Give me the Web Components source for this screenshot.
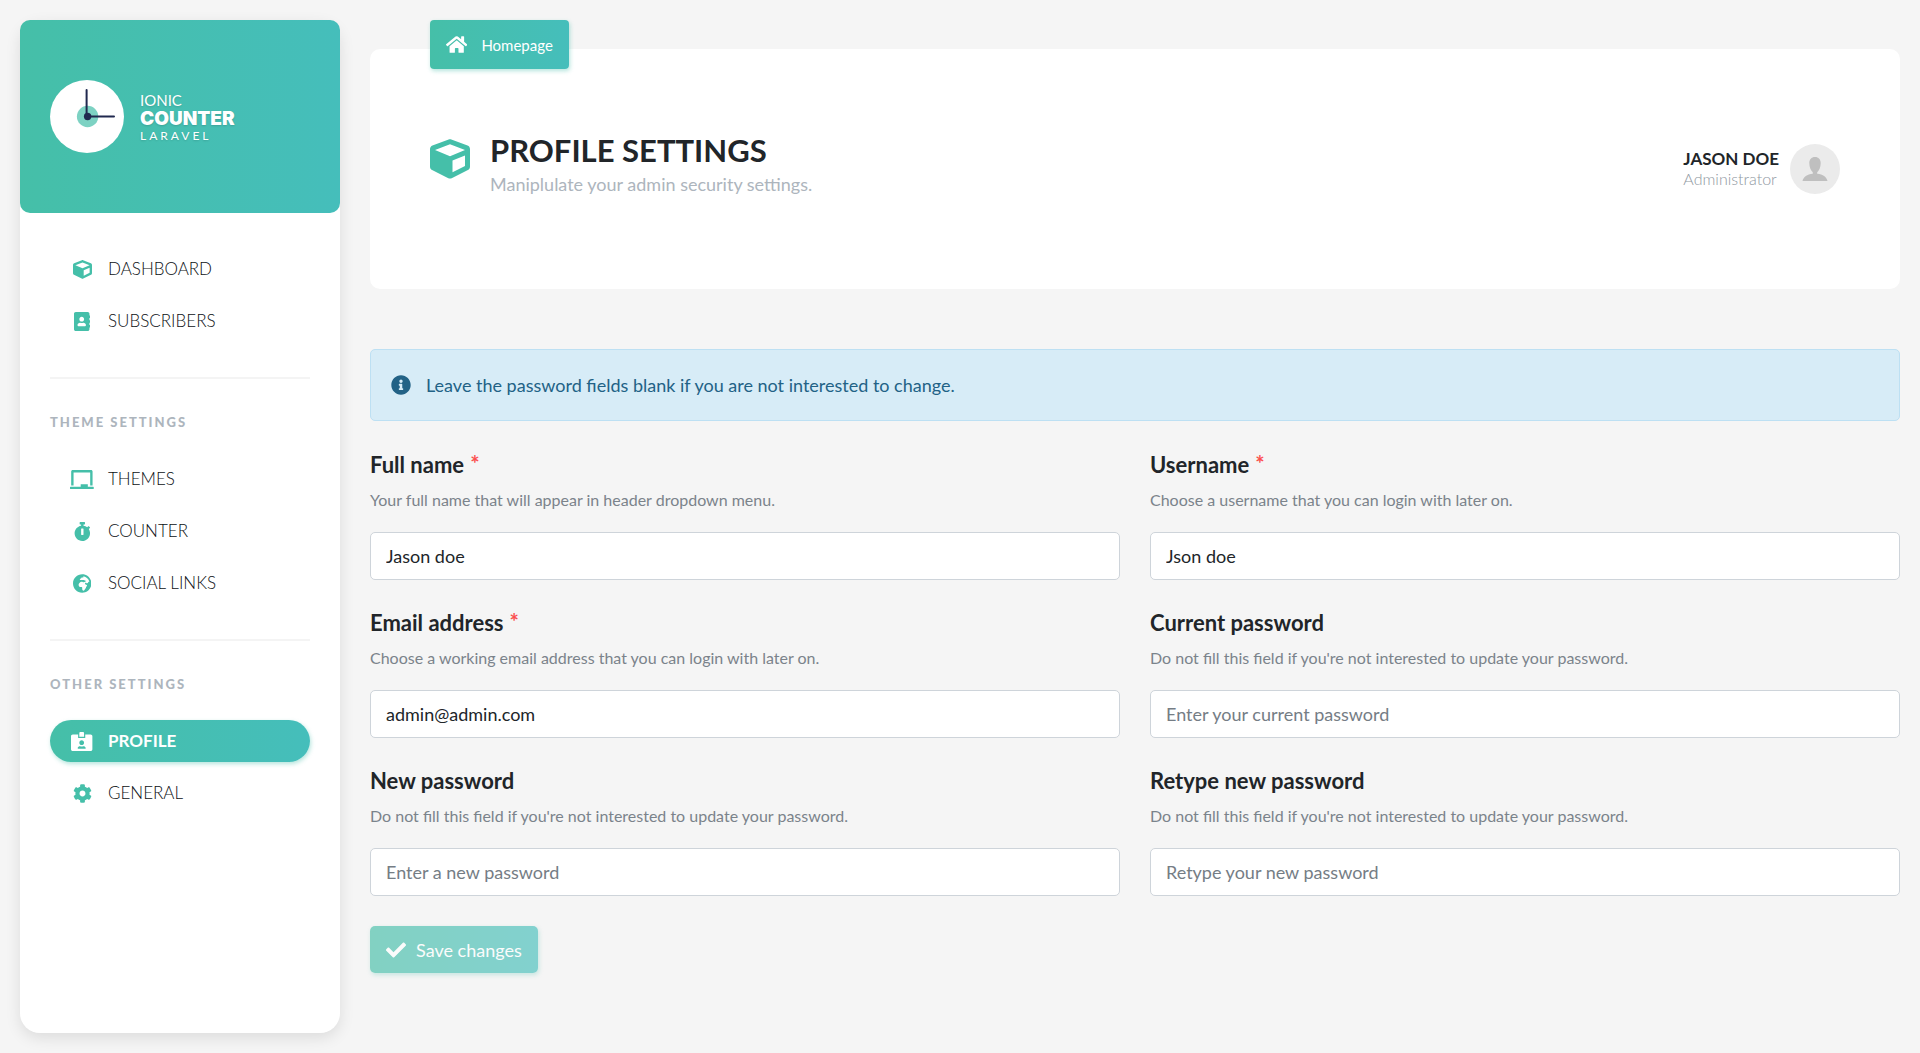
<!DOCTYPE html>
<html lang="en">
<head>
<meta charset="utf-8">
<meta name="viewport" content="width=device-width, initial-scale=1">
<title>Profile settings</title>
<style>
  :root {
    --teal: #45bfa9;
    --grad: linear-gradient(90deg, #45bfa8, #45bebb);
    --ink: #212529;
    --muted: #adb5bd;
    --page: #f5f5f5;
  }
  body {
    margin: 0;
    background: var(--page);
    color: var(--ink);
    font: 400 16px/24px Lato, "Open Sans", sans-serif;
  }
</style>
</head>
<body>
<admin-page>
  <side-bar slot="side">
    <brand-logo slot="brand"></brand-logo>
    <nav-group>
      <nav-link icon="cube" href="#dashboard">DASHBOARD</nav-link>
      <nav-link icon="book" href="#subscribers">SUBSCRIBERS</nav-link>
    </nav-group>
    <nav-group heading="THEME SETTINGS">
      <nav-link icon="board" href="#themes">THEMES</nav-link>
      <nav-link icon="stopwatch" href="#counter">COUNTER</nav-link>
      <nav-link icon="globe" href="#social">SOCIAL LINKS</nav-link>
    </nav-group>
    <nav-group heading="OTHER SETTINGS">
      <nav-link icon="card" href="#profile" active>PROFILE</nav-link>
      <nav-link icon="cog" href="#general">GENERAL</nav-link>
    </nav-group>
  </side-bar>
  <page-header>
    <span slot="crumb">Homepage</span>
    <span slot="title">PROFILE SETTINGS</span>
    <span slot="subtitle">Maniplulate your admin security settings.</span>
    <user-badge slot="user">
      JASON DOE
      <span slot="role">Administrator</span>
    </user-badge>
  </page-header>
  <info-alert>Leave the password fields blank if you are not interested to change.</info-alert>
  <settings-form>
    <form-field name="fullname" value="Jason doe" required>Full name
      <span slot="help">Your full name that will appear in header dropdown menu.</span></form-field>
    <form-field name="username" value="Json doe" required>Username
      <span slot="help">Choose a username that you can login with later on.</span></form-field>
    <form-field name="email" type="email" value="admin@admin.com" required>Email address
      <span slot="help">Choose a working email address that you can login with later on.</span></form-field>
    <form-field name="current" type="password" placeholder="Enter your current password">Current password
      <span slot="help">Do not fill this field if you're not interested to update your password.</span></form-field>
    <form-field name="new" type="password" placeholder="Enter a new password">New password
      <span slot="help">Do not fill this field if you're not interested to update your password.</span></form-field>
    <form-field name="retype" type="password" placeholder="Retype your new password">Retype new password
      <span slot="help">Do not fill this field if you're not interested to update your password.</span></form-field>
    <span slot="submit">Save changes</span>
  </settings-form>
</admin-page>

<script>
const ICONS = {
  cube: [512, "M239.1 6.3l-208 78c-18.7 7-31.1 25-31.1 45v225.1c0 18.2 10.3 34.8 26.5 42.9l208 104c13.5 6.8 29.4 6.8 42.9 0l208-104c16.3-8.1 26.5-24.8 26.5-42.9V129.3c0-20-12.4-37.9-31.1-44.9l-208-78C262 2.2 250 2.2 239.1 6.3zM256 68.4l192 72v1.1l-192 78-192-78v-1.1l192-72zm32 356V275.5l160-65v133.9l-160 80z"],
  book: [448, "M436 160c6.6 0 12-5.4 12-12v-40c0-6.6-5.4-12-12-12h-20V48c0-26.5-21.5-48-48-48H48C21.5 0 0 21.5 0 48v416c0 26.5 21.5 48 48 48h320c26.5 0 48-21.5 48-48v-48h20c6.6 0 12-5.4 12-12v-40c0-6.6-5.4-12-12-12h-20v-64h20c6.6 0 12-5.4 12-12v-40c0-6.6-5.4-12-12-12h-20v-64h20zm-228-32c35.3 0 64 28.7 64 64s-28.7 64-64 64-64-28.7-64-64 28.7-64 64-64zm112 236.8c0 10.6-10 19.2-22.4 19.2H118.4C106 384 96 375.4 96 364.8v-19.2c0-31.8 30.1-57.6 67.2-57.6h5c12.3 5.1 25.7 8 39.8 8s27.6-2.9 39.8-8h5c37.1 0 67.2 25.8 67.2 57.6v19.2z"],
  board: [640, "M96 64h448v352h64V40c0-22.06-17.94-40-40-40H72C49.94 0 32 17.94 32 40v376h64V64zm528 384H480v-64H288v64H16c-8.84 0-16 7.16-16 16v32c0 8.84 7.16 16 16 16h608c8.84 0 16-7.16 16-16v-32c0-8.84-7.16-16-16-16z"],
  stopwatch: [448, "M432 304c0 114.9-93.1 208-208 208S16 418.9 16 304c0-104 76.3-190.2 176-205.5V64h-28c-6.6 0-12-5.4-12-12V12c0-6.6 5.4-12 12-12h120c6.6 0 12 5.4 12 12v40c0 6.6-5.4 12-12 12h-28v34.5c37.5 5.8 71.7 21.6 99.7 44.6l27.5-27.5c4.7-4.7 12.3-4.7 17 0l28.3 28.3c4.7 4.7 4.7 12.3 0 17l-29.4 29.4-.6.6C419.7 223.3 432 262.2 432 304zm-176 36V188.5c0-6.6-5.4-12-12-12h-40c-6.6 0-12 5.4-12 12V340c0 6.6 5.4 12 12 12h40c6.6 0 12-5.4 12-12z"],
  globe: [496, "M248 8C111.03 8 0 119.03 0 256s111.03 248 248 248 248-111.03 248-248S384.97 8 248 8zm160 215.5v6.93c0 5.87-3.32 11.24-8.57 13.86l-15.39 7.7a15.485 15.485 0 0 1-15.53-.97l-18.21-12.14a15.52 15.52 0 0 0-13.5-1.81l-2.65.88c-9.7 3.23-13.66 14.79-7.99 23.3l13.24 19.86c2.87 4.31 7.71 6.9 12.89 6.9h8.21c8.56 0 15.5 6.94 15.5 15.5v11.34c0 3.35-1.09 6.62-3.1 9.3l-18.74 24.98c-1.42 1.9-2.39 4.1-2.83 6.43l-4.3 22.83c-.62 3.29-2.29 6.29-4.76 8.56a159.608 159.608 0 0 0-25 29.16l-13.03 19.55a27.756 27.756 0 0 1-23.09 12.36c-10.51 0-20.12-5.94-24.82-15.34a78.902 78.902 0 0 1-8.33-35.29V367.5c0-8.56-6.94-15.5-15.5-15.5h-25.88c-14.49 0-28.38-5.76-38.63-16a54.659 54.659 0 0 1-16-38.63v-14.06c0-17.19 8.1-33.38 21.85-43.7l27.58-20.69a54.663 54.663 0 0 1 32.78-10.93h.89c8.48 0 16.85 1.97 24.43 5.77l14.72 7.36c3.68 1.84 7.93 2.14 11.83.84l47.31-15.77c6.33-2.11 10.6-8.03 10.6-14.7 0-8.56-6.94-15.5-15.5-15.5h-10.09c-4.11 0-8.05-1.63-10.96-4.54l-6.92-6.92a15.493 15.493 0 0 0-10.96-4.54H199.5c-8.56 0-15.5-6.94-15.5-15.5v-4.4c0-7.11 4.84-13.31 11.74-15.04l14.45-3.61c3.74-.94 7-3.23 9.14-6.44l8.08-12.11c2.87-4.31 7.71-6.9 12.89-6.9h24.21c8.56 0 15.5-6.94 15.5-15.5v-21.7C359.23 71.63 422.86 131.02 441.93 208H423.5c-8.56 0-15.5 6.94-15.5 15.5z"],
  card: [576, "M528 64H384v96H192V64H48C21.5 64 0 85.5 0 112v352c0 26.5 21.5 48 48 48h480c26.5 0 48-21.5 48-48V112c0-26.5-21.5-48-48-48zM288 224c35.3 0 64 28.7 64 64s-28.7 64-64 64-64-28.7-64-64 28.7-64 64-64zm93.3 224H194.7c-10.4 0-18.8-10-15.6-19.8 8.3-25.6 32.4-44.2 60.9-44.2h8.2c12.3 5.1 25.7 8 39.8 8s27.6-2.9 39.8-8h8.2c28.4 0 52.5 18.5 60.9 44.2 3.2 9.9-5.2 19.8-15.6 19.8zM352 32c0-17.7-14.3-32-32-32h-64c-17.7 0-32 14.3-32 32v96h128V32z"],
  cog: [512, "M487.4 315.7l-42.6-24.6c4.3-23.2 4.3-47 0-70.2l42.6-24.6c4.9-2.8 7.1-8.6 5.5-14-11.1-35.6-30-67.8-54.7-94.6-3.8-4.1-10-5.1-14.8-2.3L380.8 110c-17.9-15.4-38.5-27.3-60.8-35.1V25.8c0-5.6-3.9-10.5-9.4-11.7-36.7-8.2-74.3-7.8-109.2 0-5.5 1.2-9.4 6.1-9.4 11.7V75c-22.2 7.9-42.8 19.8-60.8 35.1L88.7 85.5c-4.9-2.8-11-1.9-14.8 2.3-24.7 26.7-43.6 58.9-54.7 94.6-1.7 5.4.6 11.2 5.5 14L67.3 221c-4.3 23.2-4.3 47 0 70.2l-42.6 24.6c-4.9 2.8-7.1 8.6-5.5 14 11.1 35.6 30 67.8 54.7 94.6 3.8 4.1 10 5.1 14.8 2.3l42.6-24.6c17.9 15.4 38.5 27.3 60.8 35.1v49.2c0 5.6 3.9 10.5 9.4 11.7 36.7 8.2 74.3 7.8 109.2 0 5.5-1.2 9.4-6.1 9.4-11.7v-49.2c22.2-7.9 42.8-19.8 60.8-35.1l42.6 24.6c4.9 2.8 11 1.9 14.8-2.3 24.7-26.7 43.6-58.9 54.7-94.6 1.5-5.5-.7-11.3-5.6-14.1zM256 336c-44.1 0-80-35.9-80-80s35.9-80 80-80 80 35.9 80 80-35.9 80-80 80z"],
  home: [576, "M280.37 148.26L96 300.11V464a16 16 0 0 0 16 16l112.06-.29a16 16 0 0 0 15.92-16V368a16 16 0 0 1 16-16h64a16 16 0 0 1 16 16v95.64a16 16 0 0 0 16 16.05L464 480a16 16 0 0 0 16-16V300L295.67 148.26a12.19 12.19 0 0 0-15.3 0zM571.6 251.47L488 182.56V44.05a12 12 0 0 0-12-12h-56a12 12 0 0 0-12 12v72.61L318.47 43a48 48 0 0 0-61 0L4.34 251.47a12 12 0 0 0-1.6 16.9l25.5 31A12 12 0 0 0 45.15 301l235.22-193.74a12.19 12.19 0 0 1 15.3 0L530.9 301a12 12 0 0 0 16.9-1.6l25.5-31a12 12 0 0 0-1.7-16.93z"],
  info: [512, "M256 8C119.043 8 8 119.083 8 256c0 136.997 111.043 248 248 248s248-111.003 248-248C504 119.083 392.957 8 256 8zm0 110c23.196 0 42 18.804 42 42s-18.804 42-42 42-42-18.804-42-42 18.804-42 42-42zm56 254c0 6.627-5.373 12-12 12h-88c-6.627 0-12-5.373-12-12v-24c0-6.627 5.373-12 12-12h12v-64h-12c-6.627 0-12-5.373-12-12v-24c0-6.627 5.373-12 12-12h64c6.627 0 12 5.373 12 12v100h12c6.627 0 12 5.373 12 12v24z"],
  check: [512, "M173.898 439.404l-166.4-166.4c-9.997-9.997-9.997-26.206 0-36.204l36.203-36.204c9.997-9.998 26.207-9.998 36.204 0L192 312.69 432.095 72.596c9.997-9.997 26.207-9.997 36.204 0l36.203 36.204c9.997 9.997 9.997 26.206 0 36.204l-294.4 294.401c-9.998 9.997-26.207 9.997-36.204-.001z"]
};

function define(tag, render) {
  customElements.define(tag, class extends HTMLElement {
    constructor() {
      super();
      this.attachShadow({ mode: "open" });
    }
    connectedCallback() {
      this.shadowRoot.innerHTML = render(this);
    }
  });
}
const attr = (el, name) => el.getAttribute(name) || "";

define("app-icon", el => {
  const [width, path] = ICONS[attr(el, "name")];
  return `<style>
    :host { display: inline-flex; justify-content: center; align-items: center; flex: none; }
    svg { display: block; height: var(--icon-size, 19px); fill: currentColor; }
  </style>
  <svg viewBox="0 0 ${width} 512" aria-hidden="true"><path d="${path}"/></svg>`;
});

define("admin-page", () => `<style>
    :host { display: flex; gap: 30px; min-height: 100vh; padding: 20px; box-sizing: border-box; }
    main { flex: 1; min-width: 0; display: flex; flex-direction: column; padding-top: 29px; }
  </style>
  <slot name="side"></slot>
  <main><slot></slot></main>`);

define("side-bar", () => `<style>
    :host { flex: none; width: 320px; background: #fff; border-radius: 20px; box-shadow: 0 5px 15px rgba(0,0,0,.1); }
    header { display: flex; align-items: center; height: 193px; padding: 0 30px; box-sizing: border-box; background: var(--grad); border-radius: 10px; }
    nav { padding: 0 30px; }
  </style>
  <header><slot name="brand"></slot></header>
  <nav><slot></slot></nav>`);

define("brand-logo", () => `<style>
    :host { display: block; color: #fff; }
    a { display: flex; align-items: center; gap: 16px; color: inherit; text-decoration: none; text-shadow: 0 1px 2px rgba(0,0,0,.15); }
    svg { display: block; width: 74px; height: 74px; }
    .words { display: flex; flex-direction: column; }
    .top { font-size: 15px; line-height: 18px; }
    .mid { font: 900 19px/20px Inter, Lato, sans-serif; }
    .low { font-size: 12px; line-height: 14px; letter-spacing: 3px; }
  </style>
  <a href="#home">
    <svg viewBox="0 0 74 74" aria-hidden="true">
      <ellipse cx="37" cy="36.500" rx="37" ry="36.500" fill="#fff"/>
      <circle cx="37.600" cy="36.500" r="10.700" fill="#7dd2c3"/>
      <path d="M36.600 10v26.500M37 36.500h27" stroke="#20294f" stroke-width="2" stroke-linecap="round"/>
      <circle cx="37.600" cy="36.500" r="3.700" fill="#20294f"/>
    </svg>
    <span class="words"><span class="top">IONIC</span><span class="mid">COUNTER</span><span class="low">LARAVEL</span></span>
  </a>`);

define("nav-group", el => `<style>
    :host { display: block; }
    .links { display: flex; flex-direction: column; gap: 10px; padding: 35px 0; }
    .titled { padding-top: 23px; }
    h2 { margin: 0; padding-top: 30px; border-top: 2px solid #f4f4f4; color: var(--muted); font-size: 13px; line-height: 26px; font-weight: 900; letter-spacing: 2px; }
  </style>
  ${attr(el, "heading") ? `<h2>${attr(el, "heading")}</h2><div class="links titled"><slot></slot></div>` : `<div class="links"><slot></slot></div>`}`);

define("nav-link", el => `<style>
    :host { display: block; }
    a { display: flex; align-items: center; gap: 14px; height: 42px; padding: 0 20px; border-radius: 21px; color: #0c1014; text-decoration: none; font-size: 17px; line-height: 26px; font-weight: 300; }
    app-icon { width: 24px; color: var(--teal); }
    :host([active]) a { background: var(--grad); color: #fff; font-weight: 700; box-shadow: 1px 2px 4px rgba(69,190,170,.4); }
    :host([active]) app-icon { color: inherit; }
  </style>
  <a href="${attr(el, "href")}" ${el.hasAttribute("active") ? 'aria-current="page"' : ""}><app-icon name="${attr(el, "icon")}"></app-icon><slot></slot></a>`);

define("page-header", () => `<style>
    :host { display: block; position: relative; background: #fff; border-radius: 10px; }
    .crumb { position: absolute; left: 60px; top: -29px; display: flex; align-items: center; gap: 14px; height: 49px; padding: 0 16px; border-radius: 4px; background: var(--grad); color: #fff; text-decoration: none; font-size: 15px; box-shadow: 1px 2px 4px rgba(69,190,170,.4); --icon-size: 19px; }
    header { display: flex; align-items: flex-start; gap: 20px; padding: 83px 60px 91px; }
    header > app-icon { --icon-size: 40px; padding-top: 7px; color: var(--teal); }
    .text { flex: 1; }
    h1 { margin: 0 0 2px; font-size: 31px; line-height: 36px; font-weight: 700; }
    p { margin: 0; font-size: 18px; line-height: 28px; color: var(--muted); }
    .user { padding-top: 12px; }
  </style>
  <a class="crumb" href="#home"><app-icon name="home"></app-icon><slot name="crumb"></slot></a>
  <header>
    <app-icon name="cube"></app-icon>
    <div class="text"><h1><slot name="title"></slot></h1><p><slot name="subtitle"></slot></p></div>
    <div class="user"><slot name="user"></slot></div>
  </header>`);

define("user-badge", () => `<style>
    :host { display: flex; align-items: center; gap: 11px; }
    .name, .role { display: block; line-height: 20px; }
    .name { font-size: 17px; font-weight: 700; }
    .role { font-size: 16px; font-weight: 300; color: #8f98a1; }
    svg { display: block; width: 50px; height: 50px; }
  </style>
  <div><span class="name"><slot></slot></span><span class="role"><slot name="role"></slot></span></div>
  <svg viewBox="0 0 50 50" role="img" aria-label="Avatar">
    <circle cx="25" cy="25" r="25" fill="#ebebeb"/>
    <path d="M25 13c3.600 0 5.700 2.400 5.700 6.200 0 4-1.700 7.400-3.500 9v1.600c5.800.7 9.300 3 10.300 7.200h-25c1-4.200 4.500-6.500 10.300-7.200v-1.600c-1.800-1.600-3.500-5-3.500-9C19.300 15.400 21.400 13 25 13z" fill="#bfbfbf"/>
  </svg>`);

define("info-alert", () => `<style>
    :host { display: flex; align-items: center; gap: 15px; margin-top: 60px; padding: 23px 20px; border: 1px solid #bde0f3; border-radius: 5px; background: #d7ecf7; color: #226286; font-size: 18px; --icon-size: 20px; }
  </style>
  <app-icon name="info"></app-icon><span role="status"><slot></slot></span>`);

define("settings-form", () => `<style>
    :host { display: block; margin-top: 30px; }
    .grid { display: grid; grid-template-columns: 1fr 1fr; gap: 29px 30px; }
    button { display: flex; align-items: center; gap: 10px; height: 47px; margin-top: 30px; padding: 0 16px; border: 0; border-radius: 5px; background: var(--grad); color: #fff; font: inherit; font-size: 18px; opacity: .65; box-shadow: 1px 2px 4px rgba(69,190,170,.4); --icon-size: 20px; }
  </style>
  <form>
    <div class="grid"><slot></slot></div>
    <button type="submit" disabled><app-icon name="check"></app-icon><slot name="submit"></slot></button>
  </form>`);

define("form-field", el => `<style>
    :host { display: block; min-width: 0; }
    label { display: flex; gap: 6px; font-size: 22px; line-height: 28px; font-weight: 700; }
    .star { color: #fb4f4f; line-height: 26px; }
    p { margin: 9px 0 20px; font-size: 16px; line-height: 24px; color: #7b838b; }
    input { display: block; width: 100%; height: 48px; box-sizing: border-box; padding: 0 15px; border: 1px solid #ced4da; border-radius: 5px; background: #fff; color: var(--ink); font: inherit; font-size: 18px; }
    input::placeholder { color: #757d85; opacity: 1; }
  </style>
  <label for="field"><span><slot></slot></span>${el.hasAttribute("required") ? '<span class="star">*</span>' : ""}</label>
  <p id="help"><slot name="help"></slot></p>
  <input id="field" aria-describedby="help" name="${attr(el, "name")}" type="${attr(el, "type") || "text"}" value="${attr(el, "value")}" placeholder="${attr(el, "placeholder")}">`);
</script>
</body>
</html>
